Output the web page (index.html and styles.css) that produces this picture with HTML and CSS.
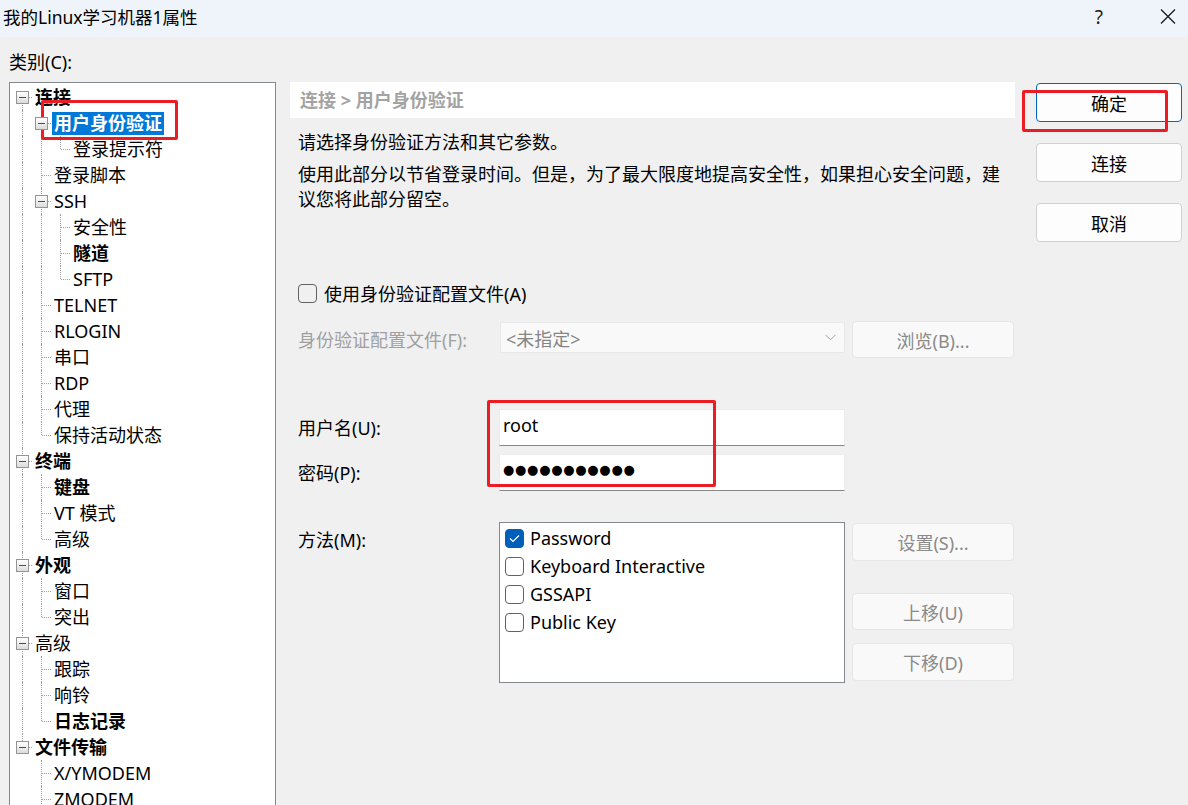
FILE: index.html
```html
<!DOCTYPE html>
<html lang="zh-CN">
<head>
<meta charset="utf-8">
<title>我的Linux学习机器1属性</title>
<link rel="stylesheet" href="styles.css">
</head>
<body>
<div class="window">
  <div class="titlebar">
    <span class="title">我的Linux学习机器1属性</span>
    <div class="tb-actions">
      <span class="help">?</span>
      <svg class="close" width="16" height="15" viewBox="0 0 16 15"><path d="M1 0.5 L15 14.5 M15 0.5 L1 14.5" stroke="#1a1a1a" stroke-width="1.3" fill="none"/></svg>
    </div>
  </div>

  <div class="main">
    <div class="left">
      <div class="cat-label">类别(C):</div>
      <div class="tree">
        <div class="row"><span class="c f"><span class="box"></span></span><span class="lbl b">连接</span></div>
        <div class="row"><span class="c v"></span><span class="c t"><span class="box"></span></span><span class="lbl sel">用户身份验证</span></div>
        <div class="row"><span class="c v"></span><span class="c v"></span><span class="c l"></span><span class="lbl">登录提示符</span></div>
        <div class="row"><span class="c v"></span><span class="c t"></span><span class="lbl">登录脚本</span></div>
        <div class="row"><span class="c v"></span><span class="c t"><span class="box"></span></span><span class="lbl">SSH</span></div>
        <div class="row"><span class="c v"></span><span class="c v"></span><span class="c t"></span><span class="lbl">安全性</span></div>
        <div class="row"><span class="c v"></span><span class="c v"></span><span class="c t"></span><span class="lbl b">隧道</span></div>
        <div class="row"><span class="c v"></span><span class="c v"></span><span class="c l"></span><span class="lbl">SFTP</span></div>
        <div class="row"><span class="c v"></span><span class="c t"></span><span class="lbl">TELNET</span></div>
        <div class="row"><span class="c v"></span><span class="c t"></span><span class="lbl">RLOGIN</span></div>
        <div class="row"><span class="c v"></span><span class="c t"></span><span class="lbl">串口</span></div>
        <div class="row"><span class="c v"></span><span class="c t"></span><span class="lbl">RDP</span></div>
        <div class="row"><span class="c v"></span><span class="c t"></span><span class="lbl">代理</span></div>
        <div class="row"><span class="c v"></span><span class="c l"></span><span class="lbl">保持活动状态</span></div>
        <div class="row"><span class="c t"><span class="box"></span></span><span class="lbl b">终端</span></div>
        <div class="row"><span class="c v"></span><span class="c t"></span><span class="lbl b">键盘</span></div>
        <div class="row"><span class="c v"></span><span class="c t"></span><span class="lbl">VT 模式</span></div>
        <div class="row"><span class="c v"></span><span class="c l"></span><span class="lbl">高级</span></div>
        <div class="row"><span class="c t"><span class="box"></span></span><span class="lbl b">外观</span></div>
        <div class="row"><span class="c v"></span><span class="c t"></span><span class="lbl">窗口</span></div>
        <div class="row"><span class="c v"></span><span class="c l"></span><span class="lbl">突出</span></div>
        <div class="row"><span class="c t"><span class="box"></span></span><span class="lbl">高级</span></div>
        <div class="row"><span class="c v"></span><span class="c t"></span><span class="lbl">跟踪</span></div>
        <div class="row"><span class="c v"></span><span class="c t"></span><span class="lbl">响铃</span></div>
        <div class="row"><span class="c v"></span><span class="c l"></span><span class="lbl b">日志记录</span></div>
        <div class="row"><span class="c l"><span class="box"></span></span><span class="lbl b">文件传输</span></div>
        <div class="row"><span class="c"></span><span class="c t"></span><span class="lbl">X/YMODEM</span></div>
        <div class="row"><span class="c"></span><span class="c t"></span><span class="lbl">ZMODEM</span></div>
      </div>
    </div>

    <div class="panel">
      <div class="crumb">连接 &gt; 用户身份验证</div>
      <div class="intro">
        <p>请选择身份验证方法和其它参数。</p>
        <p class="p2">使用此部分以节省登录时间。但是，为了最大限度地提高安全性，如果担心安全问题，建<br>议您将此部分留空。</p>
      </div>

      <div class="form">
        <div class="chk-row">
          <span class="cb"></span>
          <span>使用身份验证配置文件(A)</span>
        </div>

        <div class="field-row row-profile">
          <span class="flabel disabled">身份验证配置文件(F):</span>
          <div class="combo">
            <span>&lt;未指定&gt;</span>
            <svg class="chev" width="11" height="7" viewBox="0 0 11 7"><path d="M0.5 0.8 L5.5 5.8 L10.5 0.8" stroke="#a0a0a0" stroke-width="1" fill="none"/></svg>
          </div>
          <button class="btn-dis">浏览(B)...</button>
        </div>

        <div class="field-row row-user">
          <span class="flabel">用户名(U):</span>
          <div class="inp">root</div>
          <span></span>
        </div>

        <div class="field-row row-pwd">
          <span class="flabel">密码(P):</span>
          <div class="inp pwd"><span class="dots">●●●●●●●●●●●</span></div>
          <span></span>
        </div>

        <div class="field-row row-method">
          <span class="flabel mlabel">方法(M):</span>
          <div class="list">
            <div class="item"><span class="cb on"><svg width="11" height="9" viewBox="0 0 11 9"><path d="M1 4.5 L4 7.5 L10 1.5" stroke="#fff" stroke-width="1.2" fill="none"/></svg></span><span>Password</span></div>
            <div class="item"><span class="cb"></span><span>Keyboard Interactive</span></div>
            <div class="item"><span class="cb"></span><span>GSSAPI</span></div>
            <div class="item"><span class="cb"></span><span>Public Key</span></div>
          </div>
          <div class="side-btns">
            <button class="btn-dis b-set">设置(S)...</button>
            <button class="btn-dis b-up">上移(U)</button>
            <button class="btn-dis b-down">下移(D)</button>
          </div>
        </div>
      </div>
    </div>

    <div class="actions">
      <button class="btn default">确定</button>
      <button class="btn">连接</button>
      <button class="btn">取消</button>
    </div>
  </div>

  <div class="mark mark-tree"></div>
  <div class="mark mark-ok"></div>
  <div class="mark mark-cred"></div>
</div>
</body>
</html>
```

FILE: styles.css
```css
* { box-sizing: border-box; }

html, body {
  margin: 0;
  padding: 0;
}

body {
  width: 1188px;
  height: 805px;
  overflow: hidden;
  background: #f0f0f0;
  font-family: "Noto Sans", "Noto Sans CJK SC", sans-serif;
  font-size: 18px;
  color: #000;
}

.window {
  position: relative;
  width: 1188px;
  height: 805px;
}

/* title bar */
.titlebar {
  height: 37px;
  background: #eef4f9;
  display: flex;
  align-items: center;
  justify-content: space-between;
  padding-left: 3px;
}

.title {
  font-size: 17.5px;
  line-height: 24px;
  margin-top: -4px;
}

.tb-actions {
  display: flex;
  align-items: center;
  margin-top: -4px;
}

.help {
  font-size: 19px;
  line-height: 24px;
  color: #1a1a1a;
  margin-right: 57px;
}

.close {
  display: block;
  margin-right: 12px;
}

/* main layout */
.main {
  display: flex;
  padding: 13px 0 0 9px;
  gap: 14px;
}

.left {
  width: 267px;
  flex: none;
}

.cat-label {
  font-size: 18px;
  line-height: 24px;
  margin-bottom: 8px;
}

/* tree */
.tree {
  height: 760px;
  background: #fff;
  border: 1px solid #828790;
  padding: 1px 0 0 3px;
}

.row {
  display: flex;
  align-items: center;
  height: 26px;
}

.c {
  position: relative;
  width: 19px;
  height: 26px;
  flex: none;
}

.c.v::before,
.c.t::before,
.c.l::before,
.c.f::before {
  content: "";
  position: absolute;
  left: 9px;
  top: 0;
  bottom: 0;
  border-left: 1px dotted #a0a0a0;
}

.c.l::before { bottom: 13px; }
.c.f::before { top: 13px; }

.c.t::after,
.c.l::after,
.c.f::after {
  content: "";
  position: absolute;
  left: 10px;
  right: 0;
  top: 13px;
  border-top: 1px dotted #a0a0a0;
}

.box {
  position: absolute;
  z-index: 1;
  left: 3px;
  top: 7px;
  width: 13px;
  height: 13px;
  border: 1px solid #949494;
  background: linear-gradient(#ffffff, #dcdcdc);
}

.box::after {
  content: "";
  position: absolute;
  left: 2px;
  right: 2px;
  top: 5px;
  height: 1px;
  background: #2f4f9e;
}

.lbl {
  margin-left: 1px;
  padding: 0 2px;
  line-height: 23px;
  white-space: nowrap;
}

.lbl.b { font-weight: bold; }

.lbl.sel {
  background: #0078d7;
  color: #fff;
  font-weight: bold;
}

/* panel */
.panel {
  width: 725px;
  flex: none;
  margin-top: 32px;
}

.crumb {
  height: 36px;
  background: #fff;
  padding-left: 10px;
  line-height: 36px;
  color: #a3a3a3;
  font-weight: bold;
}

.intro {
  padding-left: 8px;
  margin-top: 12px;
  line-height: 25px;
}

.intro p { margin: 0; }

.intro .p2 {
  margin-top: 7px;
  white-space: nowrap;
}

.form {
  padding-left: 8px;
}

.chk-row {
  margin-top: 68px;
  height: 26px;
  display: flex;
  align-items: center;
  gap: 7px;
}

.cb {
  width: 19px;
  height: 19px;
  border: 1px solid #626262;
  border-radius: 4px;
  background: #fff;
  flex: none;
  display: flex;
  align-items: center;
  justify-content: center;
}

.chk-row .cb { background: transparent; }

.cb.on {
  background: #005fb8;
  border-color: #005fb8;
}

.field-row {
  display: grid;
  grid-template-columns: 194px 346px 162px;
  column-gap: 7px;
  align-items: center;
}

.row-user,
.row-pwd,
.row-method {
  column-gap: 0;
  grid-template-columns: 201px 346px 169px;
}

.row-method .side-btns { padding-left: 7px; }

.flabel {
  line-height: 24px;
  white-space: nowrap;
}

.flabel.disabled { color: #a0a0a0; }

.row-profile { margin-top: 15px; }
.row-user { margin-top: 51px; }
.row-pwd { margin-top: 8px; }
.row-method { margin-top: 31px; align-items: start; }

.combo {
  align-self: start;
  margin-top: 1px;
  margin-left: 1px;
  height: 31px;
  background: #f9f9f9;
  border: 1px solid #e8e8e8;
  border-radius: 2px;
  display: flex;
  align-items: center;
  justify-content: space-between;
  padding: 0 8px 0 5px;
  color: #858585;
}

.chev { display: block; }

.btn-dis {
  height: 37px;
  background: #f9f9f9;
  border: 1px solid #e6e6e6;
  border-radius: 4px;
  color: #8a8a8a;
  font: inherit;
  padding: 0;
}

.inp {
  height: 37px;
  background: #fff;
  border: 1px solid #ececec;
  border-bottom: 1px solid #868686;
  padding-left: 3px;
  line-height: 30px;
}

.inp.pwd {
  display: flex;
  align-items: center;
}

.dots {
  font-family: "DejaVu Sans", sans-serif;
  font-size: 13px;
  letter-spacing: 0.7px;
  line-height: 30px;
  margin-top: -5px;
}

.mlabel { margin-top: 6px; }

.list {
  height: 161px;
  background: #fff;
  border: 1px solid #828790;
  padding: 1px 0 0 5px;
}

.item {
  height: 28px;
  display: flex;
  align-items: center;
  gap: 6px;
}

.side-btns {
  display: flex;
  flex-direction: column;
}

.b-set { margin-top: 1px; height: 38px; }
.b-up { margin-top: 32px; height: 37px; }
.b-down { margin-top: 13px; height: 38px; }

/* right buttons */
.actions {
  width: 146px;
  flex: none;
  margin-top: 33px;
  margin-left: 7px;
  display: flex;
  flex-direction: column;
  gap: 21px;
}

.btn {
  height: 39px;
  background: #fdfdfd;
  border: 1px solid #d0d0d0;
  border-radius: 4px;
  font: inherit;
  color: #000;
  padding: 0;
}

.btn.default { border-color: #0067c0; }

/* red annotation marks */
.mark {
  position: absolute;
  border: 3px solid #ec1c24;
  border-radius: 2px;
  pointer-events: none;
}

.mark-tree { left: 41px; top: 100px; width: 137px; height: 40px; }
.mark-ok { left: 1022px; top: 90px; width: 146px; height: 42px; }
.mark-cred { left: 487px; top: 400px; width: 229px; height: 87px; }
```
